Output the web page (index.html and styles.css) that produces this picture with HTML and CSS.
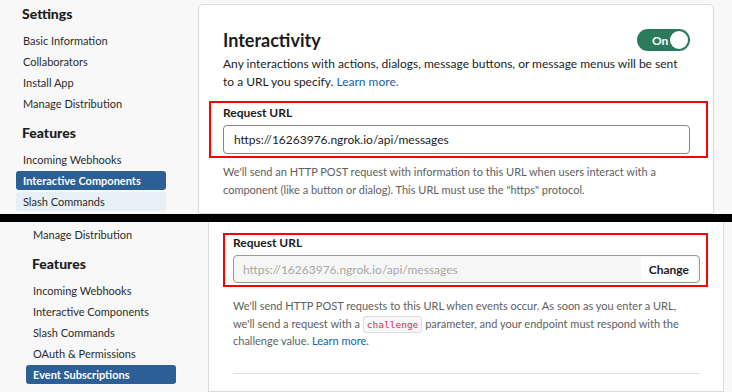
FILE: index.html
```html
<!DOCTYPE html>
<html lang="en">
<head>
<meta charset="UTF-8">
<meta name="viewport" content="width=device-width, initial-scale=1.0">
<title>Interactive Components</title>
<link rel="stylesheet" href="styles.css">
</head>
<body>
<!-- first capture: interactivity settings -->
<div class="shot shot-top">
    <nav class="sidebar">
        <h3 class="nav-heading">Settings</h3>
        <a class="nav-item">Basic Information</a>
        <a class="nav-item">Collaborators</a>
        <a class="nav-item">Install App</a>
        <a class="nav-item">Manage Distribution</a>
        <h3 class="nav-heading">Features</h3>
        <a class="nav-item">Incoming Webhooks</a>
        <a class="nav-item active">Interactive Components</a>
        <a class="nav-item hover">Slash Commands</a>
    </nav>
    <div class="card">
        <div class="card-head">
            <h2>Interactivity</h2>
            <span class="toggle">On<span class="knob"></span></span>
        </div>
        <p class="desc">Any interactions with actions, dialogs, message buttons, or message menus will be sent to a URL you specify. <a class="link">Learn more.</a></p>
        <div class="mark">
            <label class="field-label" for="url-a">Request URL</label>
            <input class="url-input" id="url-a" type="text" value="https://16263976.ngrok.io/api/messages">
        </div>
        <p class="help">We'll send an HTTP POST request with information to this URL when users interact with a component (like a button or dialog). This URL must use the "https" protocol.</p>
    </div>
</div>

<div class="cut"></div>

<!-- second capture: event subscriptions -->
<div class="shot shot-bottom">
    <nav class="sidebar">
        <a class="nav-item">Manage Distribution</a>
        <h3 class="nav-heading">Features</h3>
        <a class="nav-item">Incoming Webhooks</a>
        <a class="nav-item">Interactive Components</a>
        <a class="nav-item">Slash Commands</a>
        <a class="nav-item">OAuth &amp; Permissions</a>
        <a class="nav-item active">Event Subscriptions</a>
    </nav>
    <div class="card">
        <div class="mark">
            <label class="field-label">Request URL</label>
            <div class="url-locked">
                <span class="url-text">https://16263976.ngrok.io/api/messages</span>
                <button class="change-btn">Change</button>
            </div>
        </div>
        <p class="help">We'll send HTTP POST requests to this URL when events occur. As soon as you enter a URL, we'll send a request with a <code>challenge</code> parameter, and your endpoint must respond with the challenge value. <a class="link">Learn more.</a></p>
        <hr class="rule">
    </div>
</div>
</body>
</html>
```
FILE: styles.css
```css
body, html {
    margin: 0;
    padding: 0;
}
body {
    width: 732px;
    height: 392px;
    overflow: hidden;
    font-family: Lato, "Open Sans", sans-serif;
    color: #1d1c1d;
    background-color: #f8f8f8;
}
.shot {
    display: flex;
    overflow: hidden;
}
.shot-top {
    height: 214px;
}
.shot-bottom {
    height: 170px;
    padding-left: 10px;
}
.cut {
    height: 8px;
    background-color: #000;
}

/* sidebar */
.sidebar {
    width: 182px;
    flex-shrink: 0;
    padding-left: 16px;
    display: flex;
    flex-direction: column;
    align-items: flex-start;
}
.shot-top .sidebar {
    padding-top: 4px;
}
.shot-bottom .sidebar {
    padding-top: 3px;
}
.nav-heading {
    margin: 0 0 7px;
    padding-left: 6px;
    font-size: 14px;
    line-height: 20px;
    font-weight: 900;
}
.nav-item + .nav-heading {
    margin-top: 8px;
}
.nav-item {
    box-sizing: border-box;
    width: 150px;
    height: 19px;
    margin-bottom: 2px;
    padding-left: 7px;
    border-radius: 3px;
    font-size: 11px;
    line-height: 19px;
    color: #2c2c2c;
}
.nav-item.active {
    background-color: #2b5f96;
    color: #fff;
    font-weight: 700;
}
.nav-item.hover {
    background-color: #e7eff7;
}

/* card */
.card {
    box-sizing: border-box;
    width: 516px;
    flex-shrink: 0;
    padding: 0 23px 0 24px;
    background-color: #fff;
    border: 1px solid #dcdcdc;
}
.shot-top .card {
    margin-top: 4px;
    padding-top: 24px;
    border-radius: 5px 5px 0 0;
}
.shot-bottom .card {
    border-top: none;
    padding-top: 11px;
}
.card-head {
    display: flex;
    justify-content: space-between;
    align-items: center;
}
.card-head h2 {
    margin: 0;
    font-size: 18px;
    line-height: 22px;
    font-weight: 700;
}
.toggle {
    display: flex;
    align-items: center;
    box-sizing: border-box;
    width: 53px;
    height: 22px;
    padding: 0 2px 0 15px;
    border-radius: 11px;
    background-color: #2b7a5b;
    color: #fff;
    font-size: 12px;
    font-weight: 700;
}
.knob {
    width: 18px;
    height: 18px;
    margin-left: auto;
    border-radius: 50%;
    background-color: #fff;
}
.desc {
    margin: 4px 0 0;
    font-size: 12px;
    line-height: 18px;
}
.link {
    color: #1264a3;
}

/* red annotation box */
.mark {
    display: flex;
    flex-direction: column;
    border: 2px solid #ff0000;
}
.shot-top .mark {
    margin: 10px -18px 0 -14px;
    padding: 1px 16px 2px 12px;
}
.shot-bottom .mark {
    margin: 0 -8px 0 -10px;
    padding: 0 6px 2px 8px;
}
.field-label {
    font-size: 12px;
    line-height: 18px;
    font-weight: 700;
}
.shot-bottom .field-label {
    line-height: 15px;
}
.url-input {
    box-sizing: border-box;
    height: 29px;
    margin-top: 3px;
    padding: 0 10px;
    border: 1px solid #868686;
    border-radius: 4px;
    font-family: inherit;
    font-size: 12px;
    color: #1d1c1d;
}
.url-locked {
    display: flex;
    align-items: center;
    box-sizing: border-box;
    height: 28px;
    margin-top: 5px;
    padding: 0 2px 0 9px;
    border: 1px solid #9a9a9a;
    border-radius: 4px;
    background-color: #f6f6f6;
}
.url-text {
    flex: 1;
    font-size: 12px;
    color: #a8a8a8;
}
.change-btn {
    height: 24px;
    padding: 0 8px;
    border: none;
    border-radius: 3px;
    background-color: #fff;
    font-family: inherit;
    font-size: 12px;
    font-weight: 700;
    color: #1d1c1d;
}
.help {
    margin: 5px 0 0;
    font-size: 11px;
    line-height: 18px;
    color: #616061;
}
.shot-bottom .help {
    margin-top: 10px;
    line-height: 17.5px;
}
code {
    padding: 2px 3px;
    border: 1px solid #dddddd;
    border-radius: 3px;
    background-color: #f8f8f8;
    font-family: "DejaVu Sans Mono", monospace;
    font-size: 9.5px;
    line-height: 0;
    color: #e01e5a;
}
.rule {
    margin: 23px 0 0;
    border: none;
    border-top: 1px solid #dddddd;
}
```
